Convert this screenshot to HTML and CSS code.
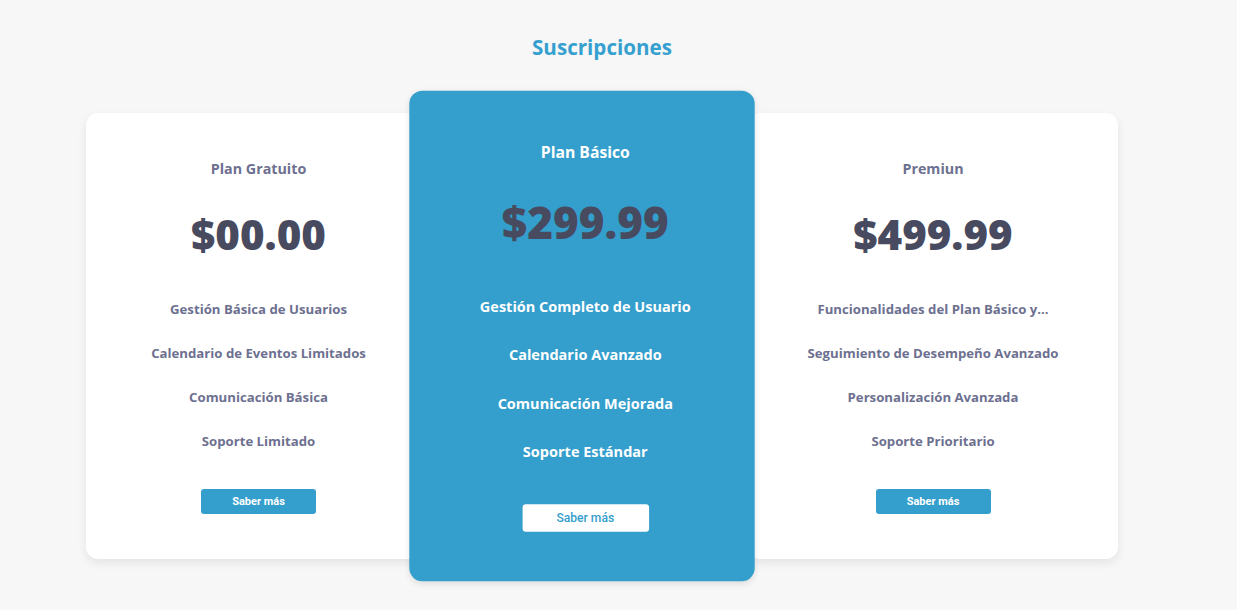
FILE: index.html
```html
<!DOCTYPE html>
<html lang="es">
<head>
<meta charset="utf-8">
<title>Suscripciones</title>
<link rel="stylesheet" href="styles.css">
</head>
<body>
<main class="page">
  <h1 class="title">Suscripciones</h1>
  <section class="plans">
    <article class="card card-left">
      <h3 class="plan-name">Plan Gratuito</h3>
      <div class="price">$00.00</div>
      <ul class="features">
        <li>Gestión Básica de Usuarios</li>
        <li>Calendario de Eventos Limitados</li>
        <li>Comunicación Básica</li>
        <li>Soporte Limitado</li>
      </ul>
      <button class="btn">Saber más</button>
    </article>
    <article class="card card-featured">
      <h3 class="plan-name">Plan Básico</h3>
      <div class="price">$299.99</div>
      <ul class="features">
        <li>Gestión Completo de Usuario</li>
        <li>Calendario Avanzado</li>
        <li>Comunicación Mejorada</li>
        <li>Soporte Estándar</li>
      </ul>
      <button class="btn">Saber más</button>
    </article>
    <article class="card card-right">
      <h3 class="plan-name">Premiun</h3>
      <div class="price">$499.99</div>
      <ul class="features">
        <li>Funcionalidades del Plan Básico y...</li>
        <li>Seguimiento de Desempeño Avanzado</li>
        <li>Personalización Avanzada</li>
        <li>Soporte Prioritario</li>
      </ul>
      <button class="btn">Saber más</button>
    </article>
  </section>
</main>
</body>
</html>
```

FILE: styles.css
```css
* { box-sizing: border-box; }
html, body { margin: 0; padding: 0; }
body {
  background: #f7f7f7;
  font-family: "Open Sans", "DejaVu Sans", sans-serif;
  width: 1237px;
  height: 610px;
  overflow: hidden;
}
.page {
  padding-top: 34px;
}
.title {
  margin: 0;
  width: 1204px;
  text-align: center;
  font-size: 20.6px;
  line-height: 26px;
  font-weight: 700;
  color: #359fcf;
}
.plans {
  display: flex;
  align-items: center;
  padding-left: 86px;
  margin-top: 53px;
}
.card {
  background: #ffffff;
  border-radius: 12px;
  height: 446px;
  padding: 45px 0;
  display: flex;
  flex-direction: column;
  align-items: center;
  box-shadow: 0 4px 10px rgba(0, 0, 0, 0.08);
}
.card-left { width: 345px; }
.card-featured {
  width: 314px;
  margin-left: -6px;
  padding-left: 6px;
  background: #349ecc;
  transform: scale(1.1);
  position: relative;
  z-index: 2;
  box-shadow: 0 2px 6px rgba(0, 0, 0, 0.1);
}
.card-right { width: 370px; margin-left: 9px; }
.plan-name {
  margin: 0;
  font-size: 14.3px;
  line-height: 22px;
  font-weight: 700;
  color: #6d7090;
}
.price {
  margin-top: 29px;
  font-size: 42px;
  line-height: 50px;
  font-weight: 800;
  color: #484a5f;
}
.card-featured .price {
  font-size: 40px;
  margin-top: 27px;
  line-height: 52px;
}
.features {
  list-style: none;
  margin: 40px 0 0;
  padding: 0;
  display: flex;
  flex-direction: column;
  align-items: center;
  gap: 24px;
}
.features li {
  font-size: 13.2px;
  line-height: 20px;
  font-weight: 700;
  color: #6d7090;
  white-space: nowrap;
}
.btn {
  margin-top: 38px;
  width: 115px;
  height: 26px;
  border: none;
  border-radius: 3px;
  background: #349ecc;
  color: #ffffff;
  font-family: Roboto, "Liberation Sans", sans-serif;
  font-size: 11px;
  font-weight: 700;
  padding: 0;
}
.card-featured .plan-name,
.card-featured .features li { color: #ffffff; }
.card-featured .btn {
  background: #ffffff;
  color: #349ecc;
  font-weight: 500;
}
```
